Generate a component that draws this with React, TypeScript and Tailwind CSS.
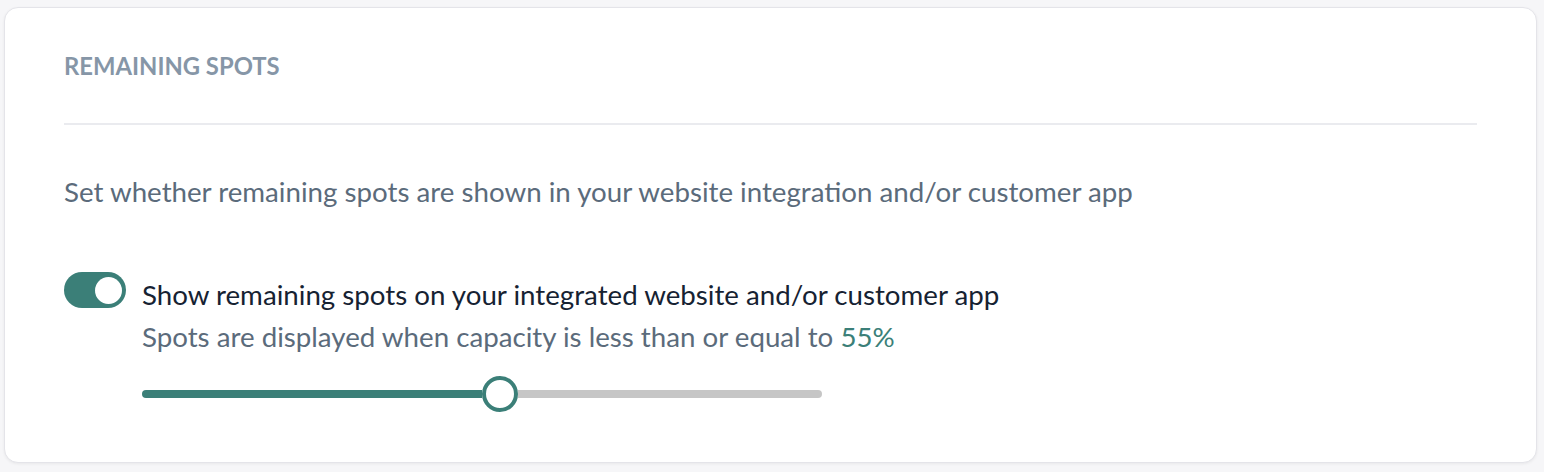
import React, { useState } from 'react';

const Toggle: React.FC<{ on: boolean; onChange: () => void }> = ({ on, onChange }) => (
  <button
    onClick={onChange}
    className={`flex h-[36px] w-[62px] shrink-0 items-center rounded-full px-[4px] ${
      on ? 'justify-end bg-[#3b7f78]' : 'justify-start bg-[#c6c6c6]'
    }`}
  >
    <span className="h-[27px] w-[27px] rounded-full bg-white" />
  </button>
);

const Slider: React.FC<{ value: number }> = ({ value }) => {
  // filled part runs up to the thumb
  const filled = (value / 55) * 340;
  return (
    <div className="flex w-[680px] items-center">
      <div className="h-[8px] rounded-l-full bg-[#3b7f78]" style={{ width: filled }} />
      <div className="h-[36px] w-[36px] shrink-0 rounded-full border-[4px] border-[#3b7f78] bg-white" />
      <div className="h-[8px] flex-1 rounded-r-full bg-[#c6c6c6]" />
    </div>
  );
};

export default function App() {
  const [on, setOn] = useState(true);
  const capacity = 55;

  return (
    <div
      className="min-h-screen bg-[#f6f6f8] pl-[4px] pr-[7px] pt-[7px] pb-[9px]"
      style={{ fontFamily: 'Lato, "Open Sans", sans-serif' }}
    >
      <div className="h-[456px] rounded-[14px] border border-[#e4e4e9] bg-white px-[59px] pt-[42px] shadow-[0_1px_3px_rgba(0,0,0,0.06)]">
        <h2 className="text-[23.8px] font-bold leading-[32px] text-[#8696a7]">REMAINING SPOTS</h2>
        <div className="mt-[41px] h-[2px] bg-[#eaebef]" />

        <p className="mt-[46px] text-[27.7px] leading-[42px] text-[#5b6b7b]">
          Set whether remaining spots are shown in your website integration and/or customer app
        </p>

        <div className="mt-[59px] flex items-start gap-[16px]">
          <Toggle on={on} onChange={() => setOn(!on)} />
          <div className="mt-[2px] flex flex-col">
            <div className="text-[27.7px] leading-[42px] text-[#162232]">
              Show remaining spots on your integrated website and/or customer app
            </div>
            <div className="text-[27.7px] leading-[42px] text-[#5b6b7b]">
              Spots are displayed when capacity is less than or equal to{' '}
              <span className="text-[#3b7f78]">{capacity}%</span>
            </div>
            <div className="mt-[18px]">
              <Slider value={capacity} />
            </div>
          </div>
        </div>
      </div>
    </div>
  );
}
